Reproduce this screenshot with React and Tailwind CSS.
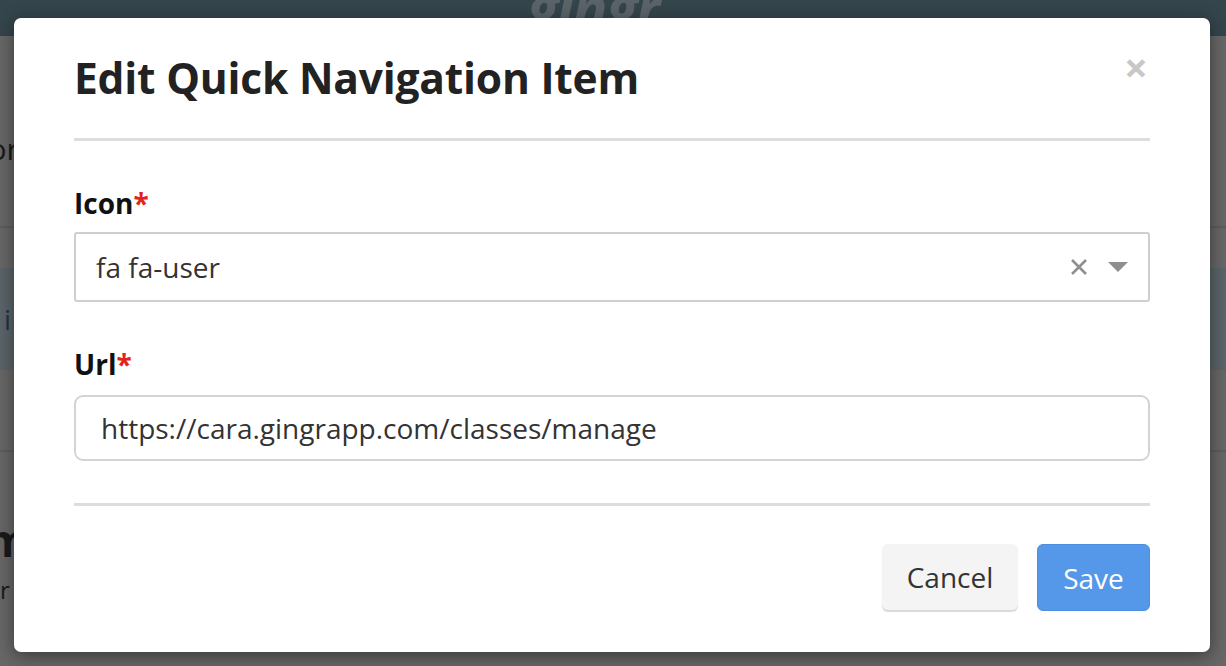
import React from "react";

const font = { fontFamily: '"Open Sans", "Noto Sans", sans-serif' };

export default function App() {
  return (
    <div className="relative w-[1226px] h-[666px] overflow-hidden bg-[#676767] font-['Open_Sans',sans-serif]">
      {/* background page */}
      <div className="h-[36px] bg-[#34454b] flex justify-center">
        <div className="ml-[-40px] mt-[-22px] text-[58px] italic font-bold text-[#5a6468] leading-none tracking-tight">gingr</div>
      </div>
      <div className="flex flex-col">
        <div className="h-[98px]" />
        <div className="h-[72px] text-[30px] text-[#1a1a1a] leading-none ml-[-27px]">For</div>
        <div className="h-[22px] border-b-2 border-[#5d5d5d]" />
        <div className="h-[40px]" />
        <div className="h-[102px] bg-[#5b6469] border-y border-[#57656b] flex items-center text-[28px] text-[#1f3442] pl-[4px]">i</div>
        <div className="h-[82px] border-b-2 border-[#5d5d5d]" />
        <div className="h-[66px]" />
        <div className="text-[44px] font-bold text-[#1a1a1a] leading-none ml-[-14px]">m</div>
        <div className="text-[24px] text-[#1a1a1a] leading-none mt-[16px]">r</div>
      </div>

      {/* modal */}
      <div className="absolute left-[14px] top-[18px] w-[1196px] h-[634px] bg-white rounded-[7px] shadow-[0_4px_18px_rgba(0,0,0,0.45)] px-[60px] flex flex-col" style={font}>
        <div className="relative h-[120px] flex items-start">
          <h1 className="mt-[31px] text-[42.5px] font-bold text-[#222] leading-[58px] tracking-[-0.2px]">Edit Quick Navigation Item</h1>
          <button className="absolute right-[2px] top-[28px] text-[42px] font-bold text-[#c8c8c8] leading-none">×</button>
        </div>
        <div className="h-[3px] bg-[#dddddd]" />
        <div className="mt-[44px] h-[36px] flex items-center text-[28px] font-bold text-[#111] leading-none">
          Icon<span className="text-[#e2231a]">*</span>
        </div>
        <div className="mt-[11px] h-[70px] border-2 border-[#cfcfcf] rounded-[3px] flex items-center pl-[20px] pr-[20px]">
          <span className="flex-1 text-[28px] text-[#333]">fa fa-user</span>
          <svg width="18" height="18" viewBox="0 0 18 18" className="mr-[20px]">
            <path d="M2 2L16 16M16 2L2 16" stroke="#8f8f8f" strokeWidth="2.6" />
          </svg>
          <svg width="20" height="10" viewBox="0 0 20 10">
            <path d="M0 0H20L10 10Z" fill="#8f8f8f" />
          </svg>
        </div>
        <div className="mt-[44px] h-[36px] flex items-center text-[28px] font-bold text-[#111] leading-none">
          Url<span className="text-[#e2231a]">*</span>
        </div>
        <div className="mt-[13px] h-[66px] border-2 border-[#d4d4d4] rounded-[9px] flex items-center pl-[25px] text-[28px] text-[#333]">
          https://cara.gingrapp.com/classes/manage
        </div>
        <div className="mt-[42px] h-[3px] bg-[#dddddd]" />
        <div className="mt-[38px] flex justify-end gap-[19px]">
          <button className="w-[136px] h-[66px] rounded-[6px] bg-[#f4f4f4] shadow-[0_2px_1px_rgba(0,0,0,0.15)] text-[28px] text-[#333]">Cancel</button>
          <button className="w-[113px] h-[67px] rounded-[6px] bg-[#5597e8] border border-[#4f8fe0] text-[28px] text-white">Save</button>
        </div>
      </div>
    </div>
  );
}
